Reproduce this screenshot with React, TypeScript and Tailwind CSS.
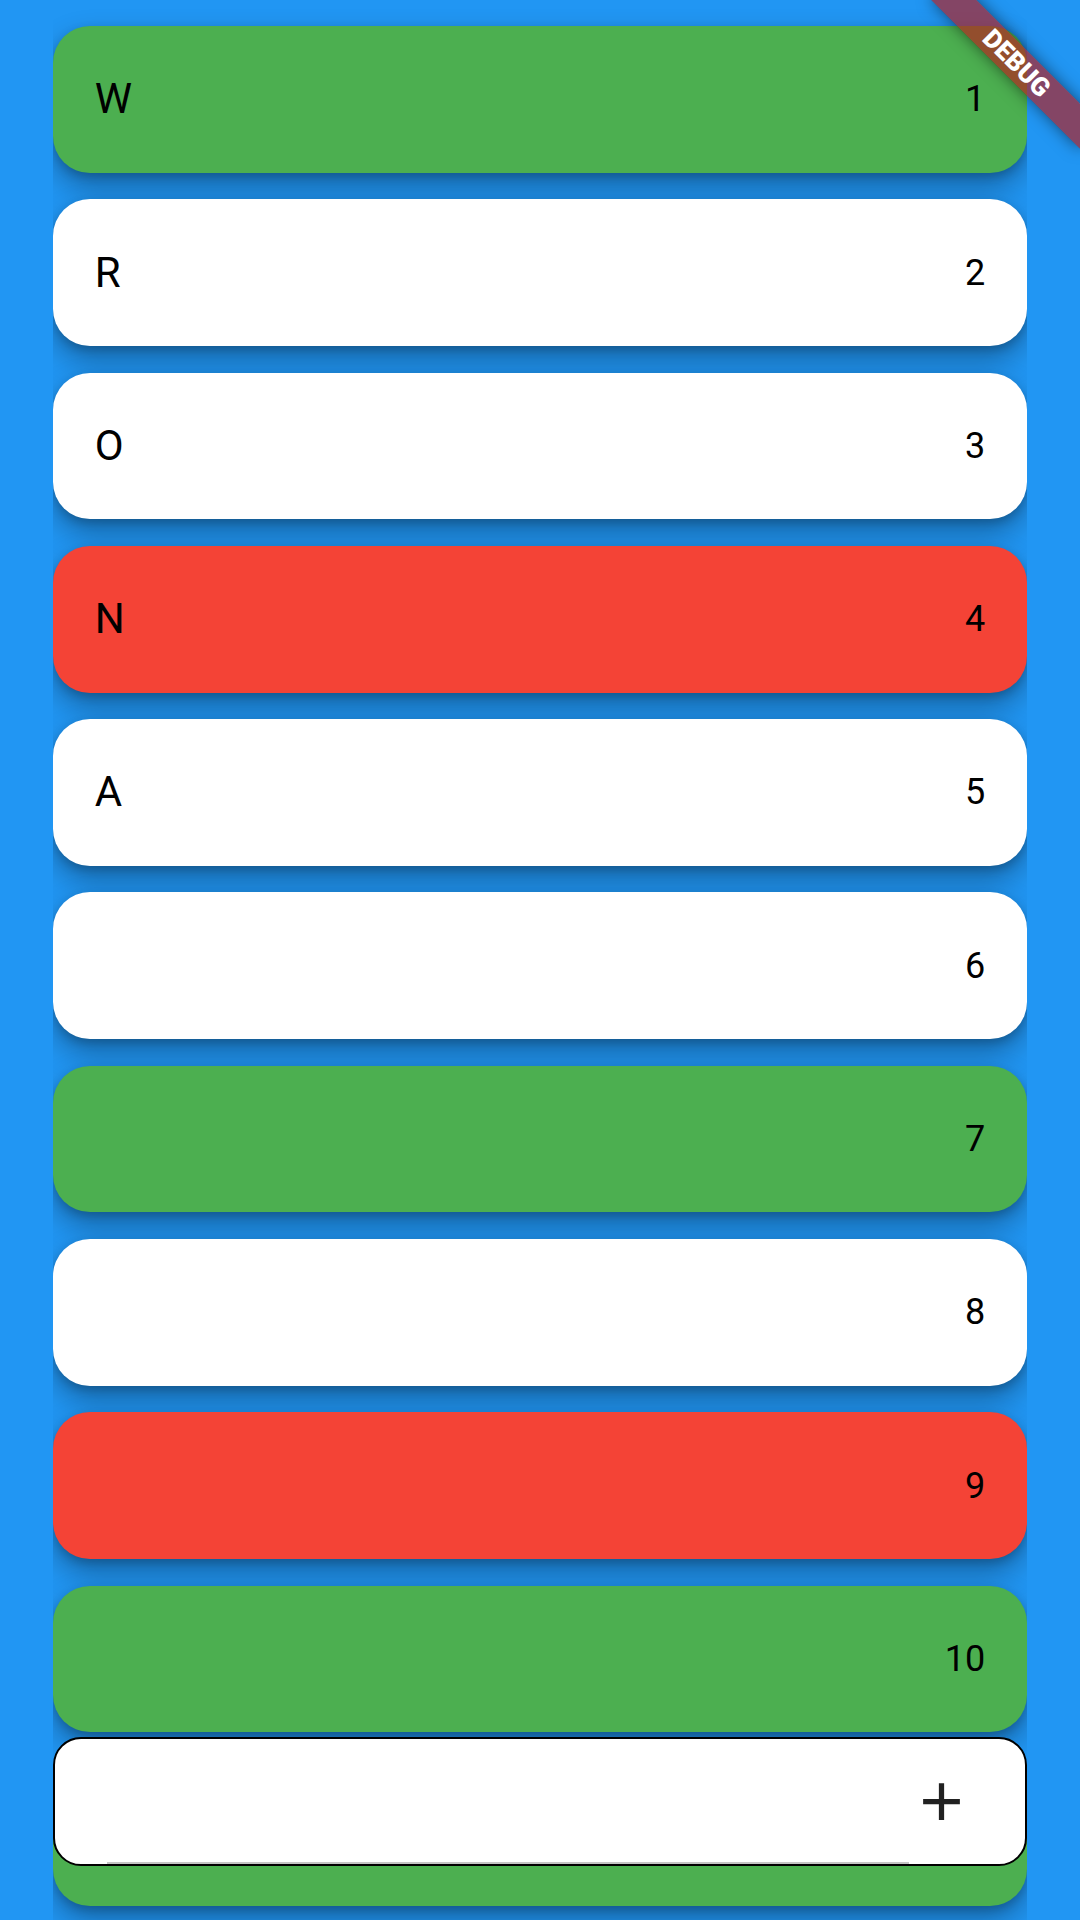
type Item = { letter: string; color: string };

const items: Item[] = [
  { letter: "W", color: "bg-[#4CAF50]" },
  { letter: "R", color: "bg-white" },
  { letter: "O", color: "bg-white" },
  { letter: "N", color: "bg-[#F44336]" },
  { letter: "A", color: "bg-white" },
  { letter: "", color: "bg-white" },
  { letter: "", color: "bg-[#4CAF50]" },
  { letter: "", color: "bg-white" },
  { letter: "", color: "bg-[#F44336]" },
  { letter: "", color: "bg-[#4CAF50]" },
  { letter: "", color: "bg-[#4CAF50]" },
];

function Tile({ item, index }: { item: Item; index: number }) {
  return (
    <div
      className={`${item.color} flex h-[146.7px] shrink-0 items-center justify-between rounded-[37px] px-[42px] text-black shadow-[0_14px_30px_rgba(0,0,0,0.32),0_4px_10px_rgba(0,0,0,0.18)]`}
    >
      <span className="text-[42px] leading-none">{item.letter}</span>
      <span className="text-[36px] leading-none">{index + 1}</span>
    </div>
  );
}

function DebugBanner() {
  return (
    <div className="pointer-events-none absolute left-[912px] top-[47px] flex h-[31.5px] w-[210px] rotate-45 items-center justify-center bg-[rgba(183,28,28,0.66)] shadow-[0_0_16px_rgba(0,0,0,0.5)]">
      <span className="text-[26px] font-black leading-none text-white">DEBUG</span>
    </div>
  );
}

export default function App() {
  return (
    <div
      className="relative h-[1920px] w-[1080px] overflow-hidden bg-[#2196F3]"
      style={{ fontFamily: "Roboto, 'Noto Sans', sans-serif" }}
    >
      <div className="mx-[52.7px] flex h-full flex-col gap-[26.6px] overflow-hidden pt-[26px]">
        {items.map((item, i) => (
          <Tile key={i} item={item} index={i} />
        ))}
      </div>

      {/* text field floating over the list */}
      <div className="absolute left-[52.7px] right-[53px] top-[1736.7px] flex h-[129.3px] items-center justify-end rounded-[28px] border-2 border-black bg-white pr-[52px]">
        <svg viewBox="0 0 24 24" className="h-[63px] w-[63px] fill-[#212121]">
          <path d="M19 13h-6v6h-2v-6H5v-2h6V5h2v6h6v2z" />
        </svg>
        <div className="absolute bottom-0 left-[52px] h-[2px] w-[802px] bg-[#c4c4c4]" />
      </div>

      <DebugBanner />
    </div>
  );
}
